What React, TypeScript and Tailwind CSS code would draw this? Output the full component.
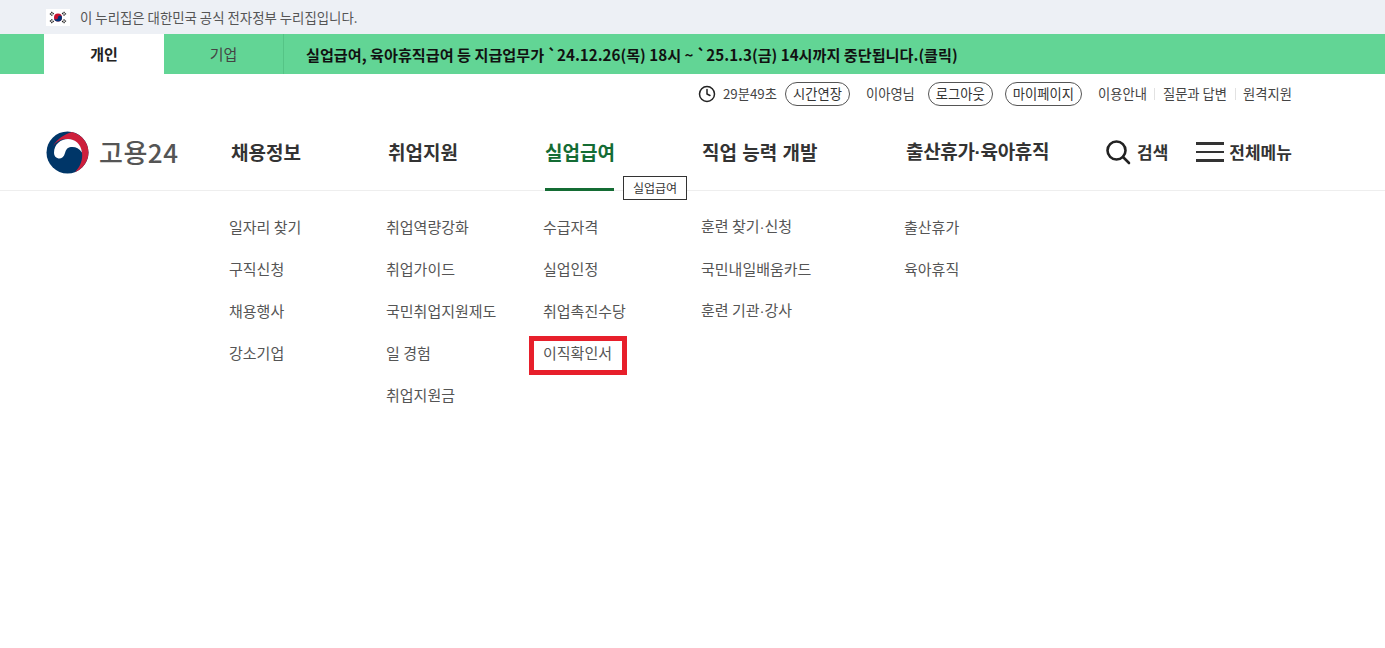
import { Clock } from "lucide-react";

const font = { fontFamily: '"Noto Sans CJK KR", "Noto Sans", sans-serif' };

const menus = [
  { title: "채용정보", navWidth: "w-[157px]", subWidth: "w-[157px]", items: ["일자리 찾기", "구직신청", "채용행사", "강소기업"] },
  { title: "취업지원", navWidth: "w-[157px]", subWidth: "w-[157px]", items: ["취업역량강화", "취업가이드", "국민취업지원제도", "일 경험", "취업지원금"] },
  { title: "실업급여", navWidth: "w-[157px]", subWidth: "w-[158px]", items: ["수급자격", "실업인정", "취업촉진수당", "이직확인서"], active: true },
  { title: "직업 능력 개발", navWidth: "w-[204px]", subWidth: "w-[203px]", items: ["훈련 찾기·신청", "국민내일배움카드", "훈련 기관·강사"] },
  { title: "출산휴가·육아휴직", navWidth: "w-[200px] tracking-[-0.35px]", subWidth: "w-[200px]", items: ["출산휴가", "육아휴직"] },
];

// the middle dot is narrow in the original, Noto's is full width
function Label({ text }: { text: string }) {
  const [a, b] = text.split("·");
  if (b === undefined) return <>{text}</>;
  return (
    <>
      {a}
      <span className="[font-family:'Liberation_Sans']">·</span>
      {b}
    </>
  );
}

function FlagIcon() {
  return (
    <span className="flex h-[17px] w-[24px] items-center justify-center bg-white">
      <svg width="24" height="17" viewBox="0 0 24 17">
        <circle cx="12" cy="8.5" r="4" fill="#c8102e" />
        <path d="M8 8.5a4 4 0 0 0 8 0a2 2 0 0 0-4 0a2 2 0 0 1-4 0z" fill="#003478" />
        <g stroke="#222" strokeWidth="1.3" strokeDasharray="1.4 .6">
          <path d="M4 5.5l2.4-2.6M5.4 6.6l2.4-2.6" />
          <path d="M17.6 2.9l2.4 2.6M16.2 4l2.4 2.6" />
          <path d="M4 11.5l2.4 2.6M5.4 10.4l2.4 2.6" />
          <path d="M17.6 14.1l2.4-2.6M16.2 13l2.4-2.6" />
        </g>
      </svg>
    </span>
  );
}

function Logo() {
  return (
    <div className="flex w-[185px] items-center gap-[10px]">
      <svg width="43" height="43" viewBox="0 0 43 43">
        <circle cx="21.5" cy="21.5" r="21" fill="#003668" />
        <path d="M7 15C11 8 18 3.500 26 1C36 3.500 42.500 12 42.500 21.500C42.500 30 37 38 29 41C34 36 37 29 36 22C35 13 27 7 19 8C14 8.500 10 11 7 15z" fill="#cd1f3c" />
        <path d="M8 22C8 13 15 8 22 8C29 8 35 13 36 21.500C33 17 29 15.500 25 16C21 16.500 20 19 19 22C18 26 15 28 12.500 27.500C10 27 8 25 8 22z" fill="#fff" />
      </svg>
      <span className="text-[26px] font-medium leading-none tracking-[0.5px] text-[#555555]" style={font}>
        고용24
      </span>
    </div>
  );
}

function Pill({ children }: { children: string }) {
  return (
    <span className="flex h-[24px] items-center rounded-full border border-[#555555] px-[7px] text-[13.3px] text-[#333333]">
      {children}
    </span>
  );
}

export default function App() {
  return (
    <div className="min-h-[648px] bg-white" style={font}>
      <div className="flex h-[34px] items-center gap-[10px] bg-[#edf0f5] pl-[46px] text-[13.4px] text-[#555555]">
        <FlagIcon />
        <span>이 누리집은 대한민국 공식 전자정부 누리집입니다.</span>
      </div>

      <div className="flex h-[40px] items-stretch bg-[#62d595] pl-[44px]">
        <div className="flex w-[120px] items-center justify-center bg-white text-[15px] font-semibold text-[#222222]">개인</div>
        <div className="flex w-[120px] items-center justify-center border-r border-[#55c486] text-[15px] text-[#444444]">기업</div>
        <div className="flex items-center pl-[22px] text-[15.15px] font-semibold text-[#111111]">
          실업급여, 육아휴직급여 등 지급업무가 `24.12.26(목) 18시 ~ `25.1.3(금) 14시까지 중단됩니다.(클릭)
        </div>
      </div>

      <div className="flex h-[40px] items-center justify-end pr-[93px] text-[13.3px] text-[#444444]">
        <Clock size={18} strokeWidth={2} className="mr-[7px] text-[#222222]" />
        <span>29분49초</span>
        <span className="ml-[8px]"><Pill>시간연장</Pill></span>
        <span className="ml-[16px]">이아영님</span>
        <span className="ml-[13px]"><Pill>로그아웃</Pill></span>
        <span className="ml-[12px]"><Pill>마이페이지</Pill></span>
        <span className="ml-[16px]">이용안내</span>
        <span className="mx-[7.5px] h-[12px] w-px bg-[#e2e2e2]" />
        <span>질문과 답변</span>
        <span className="mx-[7.5px] h-[12px] w-px bg-[#e2e2e2]" />
        <span>원격지원</span>
      </div>

      <div className="flex h-[77px] items-stretch border-b border-[#eeeeee] pl-[46px]">
        <Logo />
        {menus.map((m) => (
          <div key={m.title} className={`relative flex items-center ${m.navWidth}`}>
            <span className={`text-[19px] font-semibold [word-spacing:1px] ${m.active ? "text-[#146c34]" : "text-[#333333]"}`}>
              <Label text={m.title} />
            </span>
            {m.active && (
              <>
                <span className="absolute bottom-[-1px] left-0 h-[3px] w-[69px] bg-[#146c34]" />
                <span className="absolute left-[78px] top-[62px] z-10 flex h-[24px] w-[64px] items-center justify-center border border-[#333333] bg-white text-[12px] text-[#333333]">
                  {m.title}
                </span>
              </>
            )}
          </div>
        ))}
        <div className="ml-[-1px] flex items-center">
          <svg width="26" height="26" viewBox="0 0 26 26" fill="none" stroke="#222222" strokeWidth="2.6" strokeLinecap="round">
            <circle cx="11.500" cy="11.500" r="9" />
            <path d="M18 18l6 6" />
          </svg>
          <span className="ml-[6px] text-[17px] font-semibold text-[#333333]">검색</span>
          <span className="ml-[28px] flex w-[28px] flex-col gap-[6px]">
            <span className="h-[2.5px] bg-[#333333]" />
            <span className="h-[2.5px] bg-[#333333]" />
            <span className="h-[2.5px] bg-[#333333]" />
          </span>
          <span className="ml-[5px] text-[17px] font-semibold text-[#333333]">전체메뉴</span>
        </div>
      </div>

      <div className="flex pl-[229px] pt-[15px]">
        {menus.map((m) => (
          <ul key={m.title} className={m.subWidth}>
            {m.items.map((item) => (
              <li key={item} className="relative flex h-[42px] items-center text-[15px] text-[#555555]">
                <span><Label text={item} /></span>
                {item === "이직확인서" && (
                  <span className="absolute left-[-14px] top-[4px] h-[39px] w-[98px] border-[5px] border-[#e71f2b]" />
                )}
              </li>
            ))}
          </ul>
        ))}
      </div>
    </div>
  );
}
